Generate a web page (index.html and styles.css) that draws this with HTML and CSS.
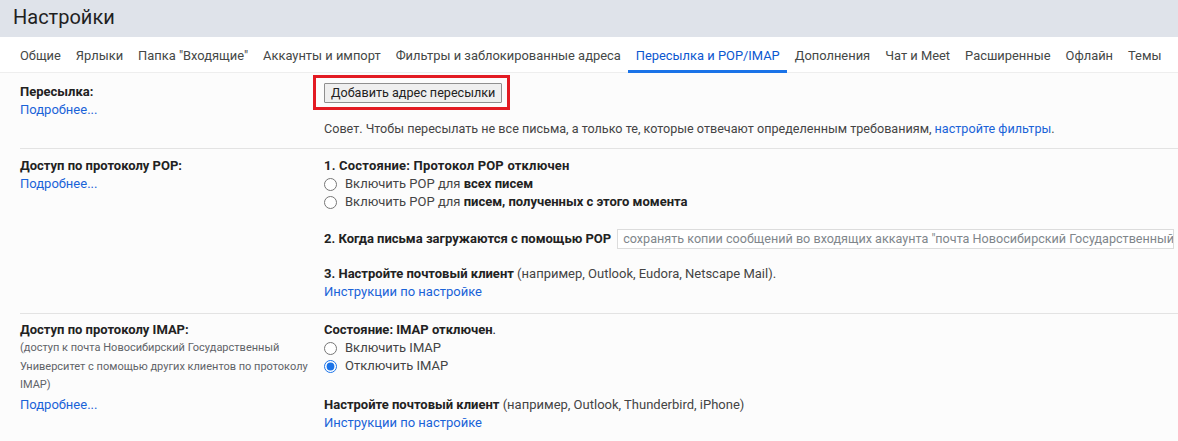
FILE: index.html
```html
<!DOCTYPE html>
<html lang="ru">
<head>
<meta charset="utf-8">
<title>Настройки</title>
<link rel="stylesheet" href="styles.css">
</head>
<body>
<header class="page-head">
  <h1 class="title">Настройки</h1>
</header>
<nav class="tabs">
  <a class="tab">Общие</a>
  <a class="tab">Ярлыки</a>
  <a class="tab">Папка "Входящие"</a>
  <a class="tab">Аккаунты и импорт</a>
  <a class="tab">Фильтры и заблокированные адреса</a>
  <a class="tab active">Пересылка и POP/IMAP</a>
  <a class="tab">Дополнения</a>
  <a class="tab">Чат и Meet</a>
  <a class="tab">Расширенные</a>
  <a class="tab">Офлайн</a>
  <a class="tab">Темы</a>
</nav>
<main class="settings">
  <section class="row row-fwd">
    <div class="label">
      <div class="label-title">Пересылка:</div>
      <a class="link">Подробнее...</a>
    </div>
    <div class="value">
      <div class="highlight"><button class="btn">Добавить адрес пересылки</button></div>
      <p class="tip">Совет. Чтобы пересылать не все письма, а только те, которые отвечают определенным требованиям, <a class="link">настройте фильтры</a>.</p>
    </div>
  </section>
  <section class="row row-pop">
    <div class="label">
      <div class="label-title">Доступ по протоколу POP:</div>
      <a class="link">Подробнее...</a>
    </div>
    <div class="value">
      <div class="strong status-pop">1. Состояние: Протокол POP отключен</div>
      <label class="radio"><input type="radio" name="pop"><span>Включить POP для <b>всех писем</b></span></label>
      <label class="radio"><input type="radio" name="pop"><span>Включить POP для <b>писем, полученных с этого момента</b></span></label>
      <div class="step step-2"><b>2. Когда письма загружаются с помощью POP</b><span class="select">сохранять копии сообщений во входящих аккаунта "почта Новосибирский Государственный</span></div>
      <div class="step step-3"><b>3. Настройте почтовый клиент</b> (например, Outlook, Eudora, Netscape Mail).</div>
      <a class="link">Инструкции по настройке</a>
    </div>
  </section>
  <section class="row row-imap">
    <div class="label">
      <div class="label-title">Доступ по протоколу IMAP:</div>
      <div class="note">(доступ к почта Новосибирский Государственный Университет с помощью других клиентов по протоколу IMAP)</div>
      <a class="link">Подробнее...</a>
    </div>
    <div class="value">
      <div class="strong">Состояние: IMAP отключен<span class="normal">.</span></div>
      <label class="radio"><input type="radio" name="imap"><span>Включить IMAP</span></label>
      <label class="radio"><input type="radio" name="imap" checked><span>Отключить IMAP</span></label>
      <div class="step step-imap"><b>Настройте почтовый клиент</b> (например, Outlook, Thunderbird, iPhone)</div>
      <a class="link">Инструкции по настройке</a>
    </div>
  </section>
</main>
</body>
</html>
```

FILE: styles.css
```css
* { box-sizing: border-box; }
html, body {
  margin: 0;
  padding: 0;
  overflow: hidden;
}
body {
  font-family: Roboto, "Noto Sans", "Liberation Sans", sans-serif;
  font-size: 13px;
  color: #222;
  background: #fcfcfc;
  width: 1178px;
  height: 441px;
}
.page-head {
  height: 37px;
  background: #dfe3ea;
  padding: 0 0 3px 13px;
  display: flex;
  align-items: center;
}
.title {
  margin: 0;
  font-size: 20px;
  font-weight: 400;
  color: #1f1f1f;
  line-height: 26px;
}
.tabs {
  display: flex;
  background: #fff;
  height: 36px;
  padding-left: 12.5px;
  border-bottom: 1px solid #eeeeee;
}
.tab {
  display: flex;
  align-items: center;
  height: 36px;
  margin-bottom: -1px;
  padding: 3px 7.5px 0;
  color: #444746;
  font-size: 12.9px;
  white-space: nowrap;
  border-bottom: 3px solid transparent;
}
.tab.active {
  color: #0b57d0;
  border-bottom-color: #1a73e8;
}
.settings {
  display: flex;
  flex-direction: column;
}
.row {
  display: grid;
  grid-template-columns: 304px 1fr;
  margin-left: 20px;
  line-height: 18px;
}
.row + .row {
  border-top: 1px solid #e3e3e3;
}
.row-fwd { padding: 10px 0 10px; }
.row-pop { padding: 8px 0 12px; }
.row-imap { padding: 7px 0 8px; }
.label-title {
  font-weight: 700;
  color: #222;
}
.link {
  color: #1a63d8;
  text-decoration: none;
  cursor: pointer;
}
.note {
  font-size: 11px;
  color: #5f6368;
  line-height: 18.5px;
  width: 292px;
  margin-bottom: 1.5px;
}
.value {
  min-width: 0;
}
.highlight {
  display: inline-block;
  margin: -8px 0 0 -11px;
  padding: 5px 5px 4px 8px;
  border: 3px solid #e31b23;
}
.btn {
  display: block;
  font-family: Roboto, "Noto Sans", "Liberation Sans", sans-serif;
  font-size: 12.6px;
  color: #222;
  background: #efefef;
  border: 1px solid #8f8f8f;
  border-radius: 1px;
  padding: 0 6px;
  height: 20px;
  line-height: 18px;
}
.tip {
  margin: 10px 0 0;
  color: #444;
  font-size: 12.6px;
}
.strong {
  font-weight: 700;
}
.status-pop { letter-spacing: 0.2px; }
.normal { font-weight: 400; }
.radio {
  display: flex;
  align-items: center;
  color: #444;
  height: 18px;
}
.radio b { color: #222; }
.radio input {
  margin: 0 8px 0 0;
  width: 13px;
  height: 13px;
  accent-color: #1a73e8;
}
.step {
  white-space: nowrap;
}
.step b { color: #222; }
.step-2 {
  margin-top: 18px;
  display: flex;
  align-items: center;
  gap: 6px;
  height: 20px;
  overflow: hidden;
}
.step-3 { margin-top: 16px; color: #444; }
.step-imap { margin-top: 21px; color: #444; }
.select {
  display: block;
  flex: none;
  width: 557px;
  border: 1px solid #dcdcdc;
  background: #fff;
  color: #80868b;
  padding: 0 5px;
  height: 20px;
  line-height: 18px;
  font-size: 12.6px;
  white-space: nowrap;
  overflow: hidden;
}
```
